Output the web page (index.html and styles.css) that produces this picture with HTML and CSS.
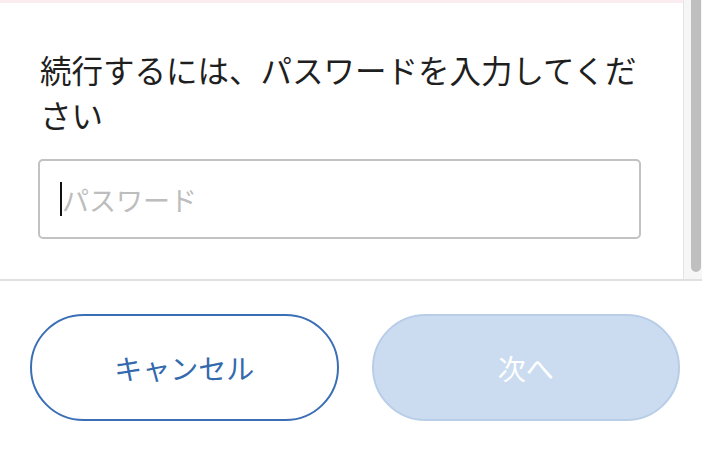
FILE: index.html
```html
<!DOCTYPE html>
<html lang="ja">
<head>
    <meta charset="UTF-8">
    <title>パスワードの確認</title>
    <link rel="stylesheet" href="styles.css">
</head>
<body>

<div class="dialogo">
    <div class="contenido">
        <div class="principal">
            <div class="franja"></div>
            <div class="cuerpo">
                <p class="mensaje">続行するには、パスワードを入力してください</p>
                <div class="campo">
                    <span class="cursor"></span>
                    <input type="password" class="entrada" placeholder="パスワード">
                </div>
            </div>
        </div>
        <div class="barra">
            <div class="pulgar"></div>
        </div>
    </div>

    <div class="acciones">
        <button class="boton cancelar">キャンセル</button>
        <button class="boton siguiente" disabled>次へ</button>
    </div>
</div>

</body>
</html>
```

FILE: styles.css
```css
html, body {
    margin: 0;
    padding: 0;
    background: #ffffff;
}

body {
    font-family: "Noto Sans CJK JP", "Noto Sans", sans-serif;
    color: #1f1f1f;
}

.dialogo {
    width: 702px;
    height: 450px;
    display: flex;
    flex-direction: column;
}

.contenido {
    height: 281px;
    display: flex;
    overflow: hidden;
    border-bottom: 2px solid #e0e0e0;
    box-sizing: border-box;
}

.principal {
    flex: 1;
    min-width: 0;
}

/* barra de desplazamiento dibujada */
.barra {
    width: 19px;
    background: #f6f6f6;
    border-left: 1px solid #e4e4e4;
    padding: 0 1px 0 7px;
    box-sizing: border-box;
}

.pulgar {
    height: 272px;
    background: #bfbfbf;
    border-radius: 0 0 6px 6px;
}

.franja {
    height: 3px;
    background: #fbedef;
}

.cuerpo {
    padding: 44px 42px 50px 38px;
}

.mensaje {
    margin: 0 0 22px 2px;
    font-size: 31.5px;
    line-height: 45px;
    font-weight: 400;
}

.campo {
    position: relative;
}

.entrada {
    width: 100%;
    height: 80px;
    box-sizing: border-box;
    border: 2px solid #c2c2c4;
    border-radius: 5px;
    padding: 0 22px;
    font-family: inherit;
    font-size: 27px;
    outline: none;
}

.entrada::placeholder {
    color: #bdbdbd;
}

.cursor {
    position: absolute;
    left: 22px;
    top: 23px;
    width: 2px;
    height: 34px;
    background: #111111;
}

.acciones {
    flex: 1;
    display: flex;
    gap: 33px;
    padding: 33px 22px 0 30px;
}

.boton {
    width: 309px;
    height: 107px;
    border-radius: 54px;
    font-family: inherit;
    font-size: 28px;
    box-sizing: border-box;
}

.cancelar {
    background: #ffffff;
    border: 2px solid #3a6fb5;
    color: #3469ae;
}

.siguiente {
    background: #cbdcf0;
    border: 2px solid #b8cde8;
    color: #ffffff;
}
```
